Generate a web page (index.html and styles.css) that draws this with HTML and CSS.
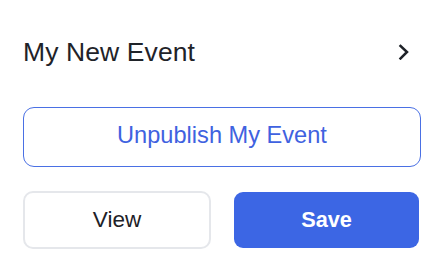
FILE: index.html
```html
<!DOCTYPE html>
<html>
<head>
<meta charset="utf-8">
<link rel="stylesheet" href="styles.css">
</head>
<body>
<div class="panel">
  <div class="header">
    <span class="title">My New Event</span>
    <svg class="chev" width="12" height="16" viewBox="0 0 12 16" aria-hidden="true">
      <path d="M2.5 2 L9 8 L2.5 14.5" fill="none" stroke="#1e2228" stroke-width="2.5" stroke-linecap="square" stroke-linejoin="miter"/>
    </svg>
  </div>
  <button class="btn outline">Unpublish My Event</button>
  <div class="actions">
    <button class="btn view">View</button>
    <button class="btn save">Save</button>
  </div>
</div>
</body>
</html>
```
FILE: styles.css
```css
html, body {
  margin: 0;
  padding: 0;
  background: #ffffff;
}
body {
  font-family: "Liberation Sans", Arial, sans-serif;
  width: 442px;
  height: 278px;
  overflow: hidden;
}
.panel {
  padding: 36px 21px 0 23px;
  display: flex;
  flex-direction: column;
}
.header {
  display: flex;
  align-items: center;
  justify-content: space-between;
  height: 32px;
  padding-right: 11px;
}
.title {
  font-size: 26.5px;
  line-height: 32px;
  color: #1f2329;
  letter-spacing: 0.1px;
}
.chev {
  display: block;
  margin-top: -1px;
}
.btn {
  font-family: "Liberation Sans", Arial, sans-serif;
  display: flex;
  align-items: center;
  justify-content: center;
  padding: 0;
  margin: 0;
  cursor: pointer;
  box-sizing: border-box;
}
.outline {
  margin-top: 39px;
  width: 398px;
  height: 60px;
  border: 1.5px solid #4a70e4;
  border-radius: 11px;
  background: #ffffff;
  color: #3f62e0;
  font-size: 23.6px;
  padding-bottom: 3px;
}
.actions {
  margin-top: 24px;
  display: grid;
  grid-template-columns: 188px 185px;
  column-gap: 23px;
  align-items: center;
}
.view {
  height: 58px;
  border: 2px solid #e5e7eb;
  border-radius: 10px;
  background: #ffffff;
  color: #1d2127;
  font-size: 22.5px;
}
.save {
  height: 56px;
  border: none;
  border-radius: 9px;
  background: #3c66e4;
  color: #ffffff;
  font-size: 21.7px;
  font-weight: bold;
}
```
